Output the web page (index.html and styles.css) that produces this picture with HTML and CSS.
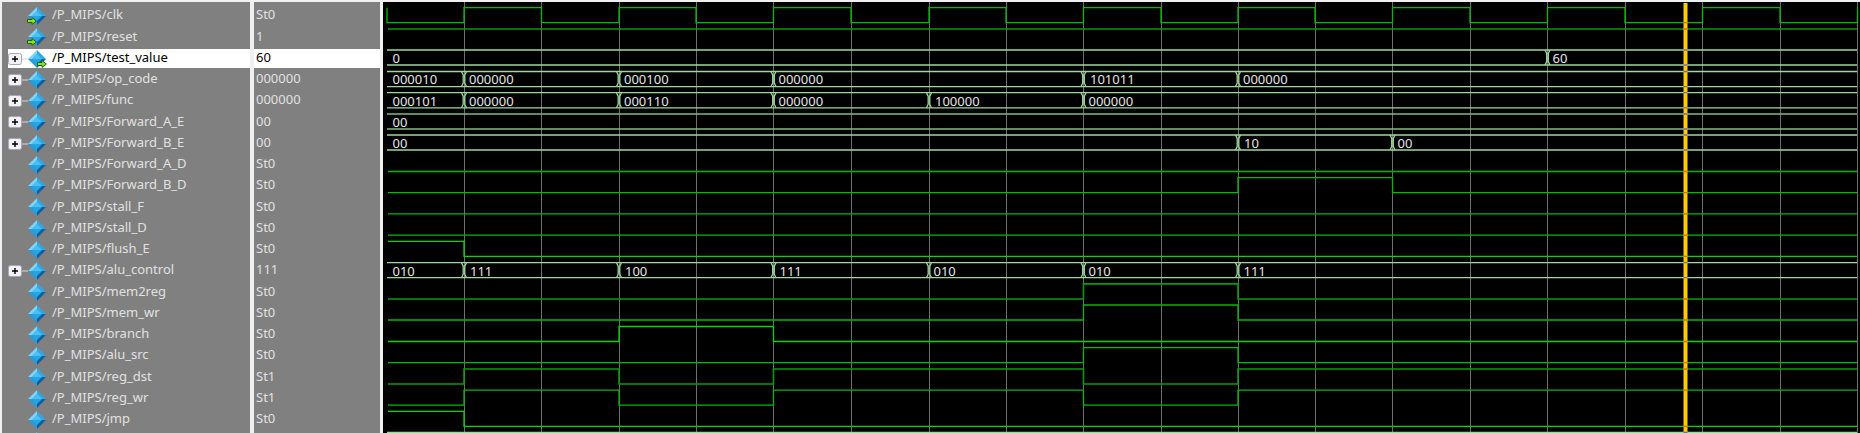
FILE: index.html
```html
<!DOCTYPE html>
<html lang="en">
<head>
    <meta charset="UTF-8">
    <title>Wave - P_MIPS</title>
    <link rel="stylesheet" href="styles.css">
</head>
<body>

    <!-- icon parts, used by every row -->
    <svg class="defs" width="0" height="0">
        <symbol id="diamond" viewBox="0 0 18 18">
            <path d="M9 0 L18 9 L9 9 Z" fill="#2fa8e6"/>
            <path d="M9 0 L0 9 L9 9 Z" fill="#7fd4f8"/>
            <path d="M0 9 L9 18 L9 9 Z" fill="#2b9ad8"/>
            <path d="M18 9 L9 18 L9 9 Z" fill="#0f5f9e"/>
            <path d="M9 4 L14 9 L9 14 L4 9 Z" fill="#23a6e8"/>
            <path d="M9 4 L14 9 L4 9 Z" fill="#4cc0f2"/>
        </symbol>
        <symbol id="arrow" viewBox="0 0 10 8">
            <path d="M0.5 2.5 H5 V0.6 L9.4 4 L5 7.4 V5.5 H0.5 Z" fill="#8ee01f" stroke="#14641e" stroke-width="1"/>
        </symbol>
        <symbol id="plus" viewBox="0 0 20 12">
            <path d="M13 6 H20" stroke="#d8d8d8" stroke-width="1"/>
            <rect x="0.5" y="0.5" width="13" height="11" rx="2" fill="#f2f2f6" stroke="#a8a8b4"/>
            <path d="M4 6 H10 M7 3 V9" stroke="#000" stroke-width="1.4"/>
        </symbol>
    </svg>

    <div class="window">
        <div class="names">
            <div class="row"><span class="slot"></span><span class="icon"><svg class="dia"><use href="#diamond"/></svg><svg class="arr arr-left"><use href="#arrow"/></svg></span><span class="label">/P_MIPS/clk</span></div>
            <div class="row"><span class="slot"></span><span class="icon"><svg class="dia"><use href="#diamond"/></svg><svg class="arr arr-left"><use href="#arrow"/></svg></span><span class="label">/P_MIPS/reset</span></div>
            <div class="row selected"><svg class="slot"><use href="#plus"/></svg><span class="icon"><svg class="dia"><use href="#diamond"/></svg><svg class="arr arr-right"><use href="#arrow"/></svg></span><span class="label">/P_MIPS/test_value</span></div>
            <div class="row"><svg class="slot"><use href="#plus"/></svg><span class="icon"><svg class="dia"><use href="#diamond"/></svg></span><span class="label">/P_MIPS/op_code</span></div>
            <div class="row"><svg class="slot"><use href="#plus"/></svg><span class="icon"><svg class="dia"><use href="#diamond"/></svg></span><span class="label">/P_MIPS/func</span></div>
            <div class="row"><svg class="slot"><use href="#plus"/></svg><span class="icon"><svg class="dia"><use href="#diamond"/></svg></span><span class="label">/P_MIPS/Forward_A_E</span></div>
            <div class="row"><svg class="slot"><use href="#plus"/></svg><span class="icon"><svg class="dia"><use href="#diamond"/></svg></span><span class="label">/P_MIPS/Forward_B_E</span></div>
            <div class="row"><span class="slot"></span><span class="icon"><svg class="dia"><use href="#diamond"/></svg></span><span class="label">/P_MIPS/Forward_A_D</span></div>
            <div class="row"><span class="slot"></span><span class="icon"><svg class="dia"><use href="#diamond"/></svg></span><span class="label">/P_MIPS/Forward_B_D</span></div>
            <div class="row"><span class="slot"></span><span class="icon"><svg class="dia"><use href="#diamond"/></svg></span><span class="label">/P_MIPS/stall_F</span></div>
            <div class="row"><span class="slot"></span><span class="icon"><svg class="dia"><use href="#diamond"/></svg></span><span class="label">/P_MIPS/stall_D</span></div>
            <div class="row"><span class="slot"></span><span class="icon"><svg class="dia"><use href="#diamond"/></svg></span><span class="label">/P_MIPS/flush_E</span></div>
            <div class="row"><svg class="slot"><use href="#plus"/></svg><span class="icon"><svg class="dia"><use href="#diamond"/></svg></span><span class="label">/P_MIPS/alu_control</span></div>
            <div class="row"><span class="slot"></span><span class="icon"><svg class="dia"><use href="#diamond"/></svg></span><span class="label">/P_MIPS/mem2reg</span></div>
            <div class="row"><span class="slot"></span><span class="icon"><svg class="dia"><use href="#diamond"/></svg></span><span class="label">/P_MIPS/mem_wr</span></div>
            <div class="row"><span class="slot"></span><span class="icon"><svg class="dia"><use href="#diamond"/></svg></span><span class="label">/P_MIPS/branch</span></div>
            <div class="row"><span class="slot"></span><span class="icon"><svg class="dia"><use href="#diamond"/></svg></span><span class="label">/P_MIPS/alu_src</span></div>
            <div class="row"><span class="slot"></span><span class="icon"><svg class="dia"><use href="#diamond"/></svg></span><span class="label">/P_MIPS/reg_dst</span></div>
            <div class="row"><span class="slot"></span><span class="icon"><svg class="dia"><use href="#diamond"/></svg></span><span class="label">/P_MIPS/reg_wr</span></div>
            <div class="row"><span class="slot"></span><span class="icon"><svg class="dia"><use href="#diamond"/></svg></span><span class="label">/P_MIPS/jmp</span></div>
            <div class="row"><span class="slot"></span><span class="icon"><svg class="dia"><use href="#diamond"/></svg></span></div>
        </div>

        <div class="values">
            <div class="row">St0</div>
            <div class="row">1</div>
            <div class="row selected">60</div>
            <div class="row">000000</div>
            <div class="row">000000</div>
            <div class="row">00</div>
            <div class="row">00</div>
            <div class="row">St0</div>
            <div class="row">St0</div>
            <div class="row">St0</div>
            <div class="row">St0</div>
            <div class="row">St0</div>
            <div class="row">111</div>
            <div class="row">St0</div>
            <div class="row">St0</div>
            <div class="row">St0</div>
            <div class="row">St0</div>
            <div class="row">St1</div>
            <div class="row">St1</div>
            <div class="row">St0</div>
        </div>

        <svg class="wave" viewBox="383 2 1477 431">
            <defs>
                <path id="tr" d="M-2.5 0 L-0.8 3.5 V11.5 L-2.5 15 M2.5 0 L0.8 3.5 V11.5 L2.5 15"/>
            </defs>

            <!-- grid -->
            <path class="grid" d="M464.5 2V433 M541.5 2V433 M619.5 2V433 M696.5 2V433 M773.5 2V433 M851.5 2V433 M929.5 2V433 M1006.5 2V433 M1083.5 2V433 M1161.5 2V433 M1238.5 2V433 M1315.5 2V433 M1392.5 2V433 M1470.5 2V433 M1547.5 2V433 M1625.5 2V433 M1702.5 2V433 M1780.5 2V433 M1857.5 2V433"/>

            <!-- single bit signals -->
            <path class="sig" d="M387 7.7 V22.7 H464 V7.7 H541.5 V22.7 H619 V7.7 H696 V22.7 H773.5 V7.7 H851 V22.7 H929 V7.7 H1006 V22.7 H1083.5 V7.7 H1161 V22.7 H1238 V7.7 H1315 V22.7 H1392.5 V7.7 H1470 V22.7 H1547.5 V7.7 H1625 V22.7 H1702.5 V7.7 H1780 V22.7 H1857.5 V7.7"/>
            <path class="sig thick" d="M388 29 H1857"/>
            <path class="sig" d="M388 171.5 H1857"/>
            <path class="sig" d="M388 192.7 H1238 V177.7 H1392.5 V192.7 H1857"/>
            <path class="sig" d="M388 213.9 H1857"/>
            <path class="sig" d="M388 235.2 H1857"/>
            <path class="sig bright" d="M388 241.4 H464 V256.4 H1857"/>
            <path class="sig thick" d="M388 299 H1083.5 V283.9 H1238 V299 H1857"/>
            <path class="sig" d="M388 320 H1083.5 V305 H1238 V320 H1857"/>
            <path class="sig bright" d="M388 341.5 H619 V326.5 H773.5 V341.5 H1857"/>
            <path class="sig" d="M388 362.7 H1083.5 V347.7 H1238 V362.7 H1857"/>
            <path class="sig thick" d="M388 384 H464 V369 H619 V384 H773.5 V369 H1083.5 V384 H1238 V369 H1857"/>
            <path class="sig" d="M388 405.2 H464 V390.2 H619 V405.2 H773.5 V390.2 H1083.5 V405.2 H1238 V390.2 H1857"/>
            <path class="sig bright" d="M388 411.4 H464 V426.4 H1857"/>

            <!-- buses -->
            <path class="bus" d="M387 50 H1857 M387 65 H1857"/>
            <path class="bus" d="M387 71.5 H1857 M387 86.7 H1857"/>
            <path class="bus" d="M387 92.7 H1857 M387 107.9 H1857"/>
            <path class="bus dim" d="M387 114 H1857 M387 129 H1857"/>
            <path class="bus" d="M387 135 H1857 M387 150 H1857"/>
            <path class="bus" d="M387 262.7 H1857 M387 277.7 H1857"/>
            <path class="bus" d="M387 432.5 H1857"/>

            <use class="bus" href="#tr" x="1547.5" y="50"/>
            <use class="bus" href="#tr" x="464" y="71.5"/>
            <use class="bus" href="#tr" x="619" y="71.5"/>
            <use class="bus" href="#tr" x="773.5" y="71.5"/>
            <use class="bus" href="#tr" x="1083.5" y="71.5"/>
            <use class="bus" href="#tr" x="1238" y="71.5"/>
            <use class="bus" href="#tr" x="464" y="92.7"/>
            <use class="bus" href="#tr" x="619" y="92.7"/>
            <use class="bus" href="#tr" x="773.5" y="92.7"/>
            <use class="bus" href="#tr" x="929" y="92.7"/>
            <use class="bus" href="#tr" x="1083.5" y="92.7"/>
            <use class="bus" href="#tr" x="1238" y="135"/>
            <use class="bus" href="#tr" x="1392.5" y="135"/>
            <use class="bus" href="#tr" x="464" y="262.7"/>
            <use class="bus" href="#tr" x="619" y="262.7"/>
            <use class="bus" href="#tr" x="773.5" y="262.7"/>
            <use class="bus" href="#tr" x="929" y="262.7"/>
            <use class="bus" href="#tr" x="1083.5" y="262.7"/>
            <use class="bus" href="#tr" x="1238" y="262.7"/>

            <text x="392.5" y="63.3">0</text>
            <text x="1552.5" y="63.3">60</text>
            <text x="392.5" y="84.4">000010</text>
            <text x="469" y="84.4">000000</text>
            <text x="624" y="84.4">000100</text>
            <text x="778.5" y="84.4">000000</text>
            <text x="1090" y="84.4">101011</text>
            <text x="1243" y="84.4">000000</text>
            <text x="392.5" y="105.6">000101</text>
            <text x="469" y="105.6">000000</text>
            <text x="624" y="105.6">000110</text>
            <text x="778.5" y="105.6">000000</text>
            <text x="935" y="105.6">100000</text>
            <text x="1088.5" y="105.6">000000</text>
            <text x="392.5" y="127">00</text>
            <text x="392.5" y="148.3">00</text>
            <text x="1244" y="148.3">10</text>
            <text x="1397.5" y="148.3">00</text>
            <text x="392.5" y="276">010</text>
            <text x="470" y="276">111</text>
            <text x="625" y="276">100</text>
            <text x="779.5" y="276">111</text>
            <text x="933.5" y="276">010</text>
            <text x="1088.5" y="276">010</text>
            <text x="1243.5" y="276">111</text>

            <!-- cursor -->
            <rect class="cursor" x="1683.5" y="3" width="4" height="430"/>
            <path class="tick" d="M1683.5 22.7h4 M1683.5 29h4 M1683.5 171.5h4 M1683.5 192.7h4 M1683.5 213.9h4 M1683.5 235.2h4 M1683.5 256.4h4 M1683.5 299h4 M1683.5 320h4 M1683.5 341.5h4 M1683.5 362.7h4 M1683.5 369h4 M1683.5 390.2h4 M1683.5 426.4h4"/>
            <path class="tick busy" d="M1683.5 50h4 M1683.5 65h4 M1683.5 71.5h4 M1683.5 86.7h4 M1683.5 92.7h4 M1683.5 107.9h4 M1683.5 114h4 M1683.5 129h4 M1683.5 135h4 M1683.5 150h4 M1683.5 262.7h4 M1683.5 277.7h4 M1683.5 432.5h4"/>
        </svg>
    </div>

</body>
</html>
```

FILE: styles.css
```css
html, body {
    margin: 0;
    height: 100%;
    overflow: hidden;
    background-color: #f0f0f0;
}

.defs {
    position: absolute;
}

.window {
    display: grid;
    grid-template-columns: 248px 126px 1477px;
    column-gap: 4px;
    height: 431px;
    padding: 2px 0 0 2px;
    font-family: "Noto Sans", sans-serif;
    font-size: 13px;
    color: #e0e0e0;
    overflow: hidden;
}

.names, .values {
    background-color: #808080;
    padding-top: 2.4px;
    overflow: hidden;
}

.window .wave {
    margin-left: -1px;
}

.row {
    display: flex;
    align-items: center;
    box-sizing: border-box;
    height: 21.25px;
    padding-top: 2px;
    padding-left: 6px;
    line-height: 16.5px;
    white-space: nowrap;
    background-clip: content-box;
}

.label {
    align-self: flex-start;
}

.values .row {
    align-items: flex-start;
    padding-left: 0;
    text-indent: 2px;
}

.selected {
    background-color: #fff;
    color: #000;
}

.slot {
    flex: none;
    width: 20px;
    height: 12px;
}

.icon {
    position: relative;
    flex: none;
    width: 18px;
    height: 18px;
    margin-right: 6px;
}

.dia {
    display: block;
    width: 18px;
    height: 18px;
}

.arr {
    position: absolute;
    top: 10px;
    width: 10px;
    height: 8px;
}

.arr-left {
    left: -1px;
}

.arr-right {
    right: -1px;
}

.wave {
    display: block;
    width: 1477px;
    height: 431px;
    background-color: #000;
}

.grid {
    stroke: #6f6f6f;
    stroke-width: 1;
    fill: none;
}

.sig {
    stroke: #00bb00;
    stroke-width: 1.3;
    fill: none;
}

.thick {
    stroke: #0a9a0a;
    stroke-width: 1.6;
}

.bright {
    stroke: #00d800;
}

.bus {
    stroke: #9fd89f;
    stroke-width: 1.3;
    fill: none;
}

.dim {
    stroke: #86b686;
}

.wave text {
    font-family: "Noto Sans", sans-serif;
    font-size: 13px;
    fill: #e4e4e4;
}

.cursor {
    fill: #ffcc00;
}

.tick {
    stroke: #ff5a10;
    stroke-width: 1.3;
}

.busy {
    stroke: #7068b8;
}
```
